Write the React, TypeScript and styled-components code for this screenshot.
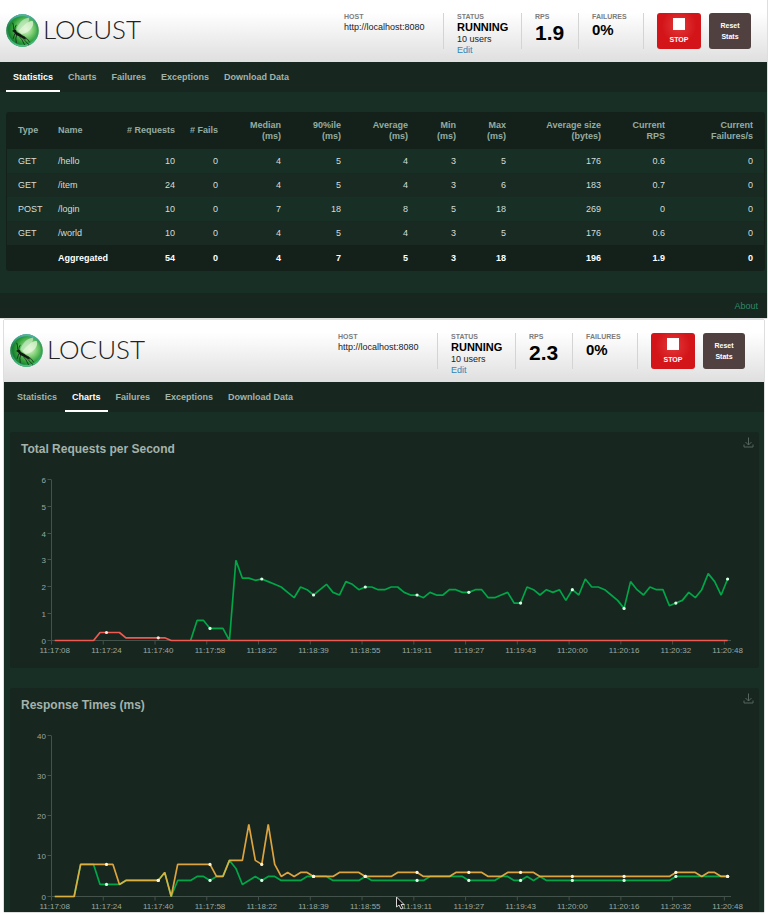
import React, { useId } from 'react';
import styled, { createGlobalStyle } from 'styled-components';

const GlobalStyle = createGlobalStyle`
  * { box-sizing: border-box; }
  body {
    margin: 0;
    background: #fff;
    font-family: "Liberation Sans", Arial, sans-serif;
    font-size: 9px;
    line-height: 11px;
  }
`;

const Page = styled.div`
  display: flex;
  flex-direction: column;
  gap: 2px;
`;

const Window = styled.section<{ $inset?: boolean }>`
  margin: ${p => (p.$inset ? '0 4px 3px' : '0 1px 0 0')};
  background: #172f25;
  box-shadow: 0 0 1px #33443c;
`;

const Header = styled.header<{ $end: number }>`
  display: flex;
  align-items: flex-start;
  height: 62px;
  padding: 13px ${p => p.$end}px 0 6px;
  background: linear-gradient(#fff 20%, #dfdfdf);
`;

const Brand = styled.a`
  display: flex;
  align-items: flex-start;
  gap: 4px;
  margin: 1px auto 0 0;
  color: #222;
  text-decoration: none;
  font: 300 26px/30px Lato, sans-serif;
`;

const Info = styled.div<{ $width: number; $first?: boolean }>`
  width: ${p => p.$width}px;
  height: 36px;
  padding-left: ${p => (p.$first ? 0 : 13)}px;
  border-right: 1px solid #d4d4d4;
  color: #222;
`;

const Label = styled.div`
  color: #7c7c7c;
  font-size: 7px;
  font-weight: bold;
  line-height: 8px;
`;

const Value = styled.div<{ $size?: number; $line?: number }>`
  color: ${p => (p.$size ? '#000' : '#222')};
  font-size: ${p => p.$size ?? 9}px;
  font-weight: ${p => (p.$size ? 'bold' : 'normal')};
  line-height: ${p => p.$line ?? 12}px;
`;

const EditLink = styled.a`
  display: block;
  color: #2d86b8;
  line-height: 10px;
  text-decoration: none;
`;

const Action = styled.button<{ $stop?: boolean }>`
  display: flex;
  flex-direction: column;
  align-items: center;
  justify-content: center;
  gap: 5px;
  width: ${p => (p.$stop ? 44 : 42)}px;
  height: 36px;
  margin-left: ${p => (p.$stop ? 13 : 8)}px;
  padding: 0;
  border: 0;
  border-radius: 3px;
  background: ${p => (p.$stop ? 'radial-gradient(circle at 50% 35%, #e2393b, #d31418 55%)' : '#504040')};
  color: #fff;
  font: bold 7px/11px "Liberation Sans", Arial, sans-serif;
`;

const StopSquare = styled.span`
  width: 12px;
  height: 12px;
  background: #fff;
`;

const StopText = styled.span`
  line-height: 9px;
`;

const Nav = styled.nav`
  display: flex;
  gap: 1px;
  height: 30px;
  padding-left: 6px;
  background: #17261f;
`;

const Tab = styled.a<{ $active: boolean }>`
  padding: 0 7px;
  border-bottom: 2px solid ${p => (p.$active ? '#fff' : 'transparent')};
  color: ${p => (p.$active ? '#fff' : '#a2b3aa')};
  font-weight: bold;
  line-height: 30px;
  height: 30px;
  text-decoration: none;
`;

const Stats = styled.main`
  padding: 20px 3px 22px 6px;
`;

const Table = styled.table`
  width: 100%;
  table-layout: fixed;
  border-collapse: separate;
  border-spacing: 0;
  border: solid #14211b;
  border-width: 0 1px;
  border-radius: 3px;
  overflow: hidden;
  color: #d5ddd9;

  th, td {
    height: 24px;
    padding: 0 11px 0 0;
    text-align: right;
    white-space: nowrap;
  }
  th:nth-child(-n + 2), td:nth-child(-n + 2) {
    padding: 0 0 0 11px;
    text-align: left;
  }
  thead th {
    height: 37px;
    background: #14211b;
    color: #94ada1;
  }
  tbody tr { background: #172f25; }
  tbody tr:nth-child(even) { background: #192a22; }
  tfoot td {
    height: 26px;
    background: #14211b;
    color: #fff;
    font-weight: bold;
  }
`;

const Footer = styled.footer`
  display: flex;
  justify-content: flex-end;
  align-items: center;
  height: 25px;
  padding: 2px 9px 0 0;
  background: #17261f;
`;

const AboutLink = styled.a`
  color: #2f8867;
  text-decoration: none;
`;

const Charts = styled.main`
  display: flex;
  flex-direction: column;
  gap: 20px;
  padding: 20px 5px 0 6px;
`;

const Card = styled.article<{ $open?: boolean }>`
  border-radius: ${p => (p.$open ? '3px 3px 0 0' : '3px')};
  background: #17261f;
`;

const CardHead = styled.div`
  display: flex;
  justify-content: space-between;
  height: 32px;
  padding: 0 5px 0 11px;
`;

const Title = styled.h2`
  margin: 0;
  color: #a3b3ab;
  font-size: 12px;
  line-height: 34px;
`;

const SaveButton = styled.button`
  align-self: flex-start;
  width: 11px;
  height: 11px;
  margin-top: 5px;
  padding: 0;
  border: 0;
  background: none;

  svg { display: block; }
`;

const Plot = styled.svg`
  display: block;
  width: 100%;
  height: auto;
  overflow: hidden;
  font-size: 8px;
  fill: #9aa8a1;
`;

function LocustMark() {
  const id = useId();
  return (
    <svg width="33" height="33" viewBox="0 0 32 32" aria-hidden="true">
      <defs>
        <radialGradient id={id + 'g'} cx="60%" cy="46%" r="60%">
          <stop offset="0" stopColor="#e6f8d8" />
          <stop offset=".35" stopColor="#86d27c" />
          <stop offset=".68" stopColor="#2fa138" />
          <stop offset="1" stopColor="#0b6a28" />
        </radialGradient>
        <linearGradient id={id + 's'} x1="0" y1="0" x2="0" y2="1">
          <stop offset="0" stopColor="#4fb0b4" />
          <stop offset=".4" stopColor="#2f8f62" stopOpacity=".5" />
          <stop offset="1" stopColor="#46c08a" />
        </linearGradient>
      </defs>
      <circle cx="16" cy="16" r="15.7" fill={`url(#${id}g)`} />
      <circle cx="16" cy="16" r="14.8" fill="none" stroke={`url(#${id}s)`} strokeWidth="1.8" />
      <path d="M10 15C12 9 17 4 22.500 3.500C23 8 18 14 12 17Z" fill="#c4ebc4" opacity=".7" />
      <path d="M12 17C16 12 22 6 26 7C28 12 22 18.500 15 19.500Z" fill="#e4f7da" opacity=".75" />
      <path d="M6 16.500L7.500 15L9.500 15.500L10.500 17.500L14 19.500L18 22L20 25L16 23.500L12.500 21.500L9.500 20L8 18Z" fill="#101a12" />
      <path d="M7.500 15Q7.500 11 6.500 8.500M8.500 15.500Q8.500 12.500 10 10.500M8.500 19L7 24M10.500 20L9.500 23.500L10 28M13 22L15.500 25L18 30M16 23L19 26.500L22.500 30M17 21.500L20.500 24L23 27.500" fill="none" stroke="#101a12" strokeWidth=".7" />
    </svg>
  );
}

const TABS = ['Statistics', 'Charts', 'Failures', 'Exceptions', 'Download Data'];

function TopBar({ rps, active, end }: { rps: string; active: string; end: number }) {
  return (
    <>
      <Header $end={end}>
        <Brand href="#"><LocustMark />LOCUST</Brand>
        <Info $width={100} $first>
          <Label>HOST</Label>
          <Value>http://localhost:8080</Value>
        </Info>
        <Info $width={78}>
          <Label>STATUS</Label>
          <Value $size={11}>RUNNING</Value>
          <Value>10 users</Value>
          <EditLink href="#edit">Edit</EditLink>
        </Info>
        <Info $width={57}>
          <Label>RPS</Label>
          <Value $size={21} $line={24}>{rps}</Value>
        </Info>
        <Info $width={65}>
          <Label>FAILURES</Label>
          <Value $size={15} $line={18}>0%</Value>
        </Info>
        <Action $stop><StopSquare /><StopText>STOP</StopText></Action>
        <Action><span>Reset<br />Stats</span></Action>
      </Header>
      <Nav>
        {TABS.map(t => <Tab key={t} href="#" $active={t === active}>{t}</Tab>)}
      </Nav>
    </>
  );
}

const COLUMNS: [string, string, number][] = [
  ['Type', '', 40], ['Name', '', 64], ['# Requests', '', 75], ['# Fails', '', 43],
  ['Median', '(ms)', 63], ['90%ile', '(ms)', 60], ['Average', '(ms)', 67], ['Min', '(ms)', 48],
  ['Max', '(ms)', 50], ['Average size', '(bytes)', 95], ['Current', 'RPS', 64], ['Current', 'Failures/s', 88],
];

const ROWS = [
  ['GET', '/hello', 10, 0, 4, 5, 4, 3, 5, 176, 0.6, 0],
  ['GET', '/item', 24, 0, 4, 5, 4, 3, 6, 183, 0.7, 0],
  ['POST', '/login', 10, 0, 7, 18, 8, 5, 18, 269, 0, 0],
  ['GET', '/world', 10, 0, 4, 5, 4, 3, 5, 176, 0.6, 0],
];
const TOTAL = ['', 'Aggregated', 54, 0, 4, 7, 5, 3, 18, 196, 1.9, 0];

function StatsTable() {
  return (
    <Table>
      <colgroup>{COLUMNS.map((c, i) => <col key={i} width={c[2]} />)}</colgroup>
      <thead>
        <tr>{COLUMNS.map(([a, b], i) => <th key={i} scope="col">{a}{b && <><br />{b}</>}</th>)}</tr>
      </thead>
      <tbody>
        {ROWS.map((r, i) => <tr key={i}>{r.map((c, j) => <td key={j}>{c}</td>)}</tr>)}
      </tbody>
      <tfoot><tr>{TOTAL.map((c, i) => <td key={i}>{c}</td>)}</tr></tfoot>
    </Table>
  );
}

const TIMES = ['11:17:08', '11:17:24', '11:17:40', '11:17:58', '11:18:22', '11:18:39', '11:18:55',
  '11:19:11', '11:19:27', '11:19:43', '11:20:00', '11:20:16', '11:20:32', '11:20:48'];

const fill = (n: number, v: number): number[] => Array(n).fill(v);

const RPS: (number | null)[] = [
  ...Array(21).fill(null), 0, 0.75, 0.75, 0.45, 0.45, 0.45, 0, 3, 2.33, 2.33, 2.25,
  2.3, 2.2, 2.1, 2, 1.8, 1.6, 2, 1.9, 1.7, 1.9, 2.1, 1.8, 1.7, 2.2, 2.1, 1.9,
  2, 2, 1.9, 1.9, 2, 2, 1.8, 1.7, 1.7, 1.6, 1.8, 1.7, 1.7, 1.9, 1.9, 1.8,
  1.8, 1.9, 1.9, 1.6, 1.6, 1.7, 1.8, 1.4, 1.4, 2, 1.9, 1.7, 1.9, 1.8, 1.9, 1.5,
  1.9, 1.7, 2.3, 2, 2, 1.9, 1.7, 1.5, 1.2, 2.2, 1.9, 1.7, 2, 1.9, 1.9, 1.3,
  1.4, 1.5, 1.8, 1.6, 1.9, 2.5, 2.2, 1.7, 2.3,
];
const FAILS = [...fill(7, 0), ...fill(4, 0.3), ...fill(7, 0.1), ...fill(87, 0)];

const MEDIAN = [
  ...fill(4, 0), 8, 8, 8, 3, 3, 3, 3, ...fill(6, 4), 6, 0, 4, 4, 4, 5, 5, 4, 5, 5, 9, 7, 3, 4, 5,
  4, 5, 5, 4, 4, 4, 4, 5, 5, 5, 5, ...fill(5, 4), 5, ...fill(9, 4), ...fill(6, 5), ...fill(5, 4),
  5, 5, 4, 4, 5, 4, 5, ...fill(20, 4), ...fill(9, 5),
];
const P95 = [
  ...fill(4, 0), ...fill(6, 8), 3, ...fill(6, 4), 6, 0, ...fill(6, 8), 5, 5, 9, 9, 9, 18, 9,
  8, 18, 8, 5, 6, 5, 6, 6, 5, 5, 5, 5, ...fill(4, 6), ...fill(5, 5), ...fill(4, 6), ...fill(5, 5),
  ...fill(5, 6), 5, 5, 5, ...fill(5, 6), ...fill(21, 5), ...fill(4, 6), 5, 6, 6, 5, 5,
];

interface Series {
  values: (number | null)[];
  color: string;
  dot: string;
  opacity?: number;
  /** last index that gets a marker */
  to?: number;
}

const LEFT = 41.5;
const BASE = 208.5;
const TOP = 48;
const STEP = 6.47;

function Chart({ title, ticks, series, height, children }: {
  title: string; ticks: number[]; series: Series[]; height: number; children?: React.ReactNode;
}) {
  const max = ticks[ticks.length - 1];
  const px = (i: number) => LEFT + STEP * (i + 0.5);
  const py = (v: number) => BASE - (v / max) * (BASE - TOP);
  return (
    <Card $open={height < 204}>
      <CardHead>
        <Title>{title}</Title>
        <SaveButton aria-label="Save as image">
          <svg width="11" height="11" viewBox="0 0 11 11" fill="none" stroke="#56655e">
            <path d="M5.500 0.500V8M2.500 5L5.500 8L8.500 5M1 7.500V10H10V7.500" />
          </svg>
        </SaveButton>
      </CardHead>
      <Plot viewBox={`0 32 749 ${height}`} role="img" aria-label={title}>
        <path d={`M${LEFT} ${TOP}V${BASE}H721`} fill="none" stroke="#43524a" />
        {ticks.map(t => (
          <g key={t}>
            <path d={`M${LEFT - 4} ${Math.round(py(t)) - 0.5}h4`} stroke="#43524a" />
            <text x="36" y={py(t) + 3} textAnchor="end">{t}</text>
          </g>
        ))}
        {TIMES.map((t, i) => (
          <g key={t}>
            <path d={`M${LEFT + i * 8 * STEP} ${BASE}v4`} stroke="#43524a" />
            <text x={px(i * 8)} y="221" textAnchor="middle">{t}</text>
          </g>
        ))}
        {series.map(s => (
          <polyline
            key={s.color}
            points={s.values.map((v, i) => (v === null ? '' : `${px(i)},${py(v)}`)).filter(Boolean).join(' ')}
            fill="none"
            stroke={s.color}
            strokeOpacity={s.opacity ?? 1}
            strokeWidth="1.7"
            strokeLinejoin="bevel"
          />
        ))}
        {series.map(s => s.values.map((v, i) => (
          i % 8 === 0 && v !== null && i >= 8 && i <= (s.to ?? 104)
            ? <circle key={s.color + i} cx={px(i)} cy={py(v)} r="1.6" fill={s.dot} />
            : null
        )))}
        {children}
      </Plot>
    </Card>
  );
}

export default function App() {
  return (
    <>
      <GlobalStyle />
      <Page>
        <Window>
          <TopBar rps="1.9" active="Statistics" end={16} />
          <Stats><StatsTable /></Stats>
          <Footer><AboutLink href="#about">About</AboutLink></Footer>
        </Window>
        <Window $inset>
          <TopBar rps="2.3" active="Charts" end={19} />
          <Charts>
            <Chart
              title="Total Requests per Second"
              ticks={[0, 1, 2, 3, 4, 5, 6]}
              height={204}
              series={[
                { values: RPS, color: '#00a647', dot: '#d5ffe3' },
                { values: FAILS, color: '#ee5a52', dot: '#ffe4dc', to: 16 },
              ]}
            />
            <Chart
              title="Response Times (ms)"
              ticks={[0, 10, 20, 30, 40]}
              height={192}
              series={[
                { values: MEDIAN, color: '#00a647', dot: '#d5ffe3' },
                { values: P95, color: '#f3b143', dot: '#fff3d2', opacity: 0.9 },
              ]}
            >
              <path d="M386.500 209V219L389 217L391 221L393 220L391 216.500H394Z" fill="#111" stroke="#d8d8d8" />
            </Chart>
          </Charts>
        </Window>
      </Page>
    </>
  );
}
